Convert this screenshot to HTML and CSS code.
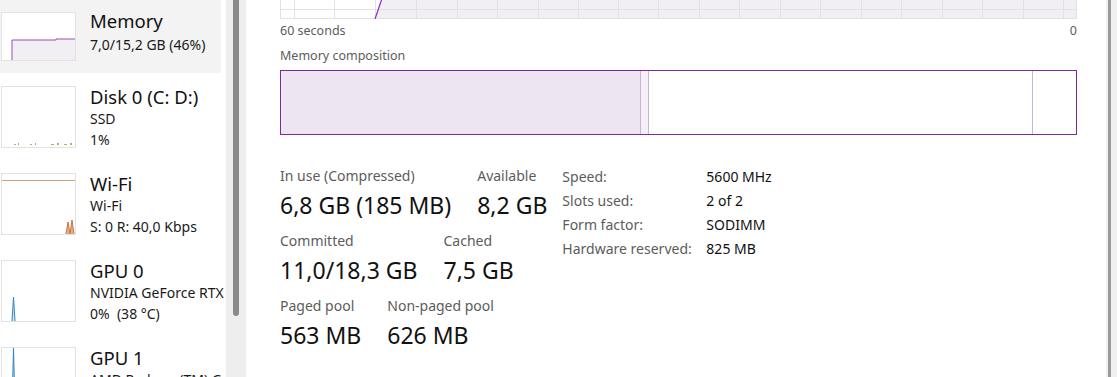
FILE: index.html
```html
<!DOCTYPE html>
<html lang="en">

<head>
    <meta charset="UTF-8">
    <meta name="viewport" content="width=device-width, initial-scale=1.0">
    <title>Task Manager - Performance</title>
    <link rel="stylesheet" href="styles.css">
</head>

<body>
    <nav class="sidebar">
        <div class="item item-memory selected">
            <div class="thumb thumb-memory">
                <svg width="73" height="47" viewBox="0 0 73 47">
                    <polygon points="10,47 10,27 54,27 54,26 73,26 73,47" fill="#f1eff3" />
                    <polyline points="10,47 10,27 54,27 54,26 73,26" fill="none" stroke="#9b4cbf" stroke-width="1" />
                </svg>
            </div>
            <div class="info">
                <div class="title">Memory</div>
                <div class="sub sub-memory">7,0/15,2 GB (46%)</div>
            </div>
        </div>

        <div class="item">
            <div class="thumb">
                <svg width="73" height="60" viewBox="0 0 73 60">
                    <g fill="#8fc46a">
                        <rect x="12" y="57" width="2" height="1" />
                        <rect x="16" y="56" width="1" height="2" />
                        <rect x="28" y="57" width="2" height="1" />
                        <rect x="33" y="56" width="1" height="2" />
                        <rect x="49" y="57" width="3" height="1" />
                        <rect x="55" y="56" width="2" height="2" />
                        <rect x="62" y="57" width="3" height="1" />
                        <rect x="68" y="56" width="2" height="2" />
                    </g>
                </svg>
            </div>
            <div class="info">
                <div class="title">Disk 0 (C: D:)</div>
                <div class="sub">SSD</div>
                <div class="sub">1%</div>
            </div>
        </div>

        <div class="item">
            <div class="thumb">
                <svg width="73" height="60" viewBox="0 0 73 60">
                    <line x1="0" y1="6.5" x2="73" y2="6.5" stroke="#c9a27c" stroke-width="1" />
                    <polyline points="64,60 66,48 68,60 70,46 72,60" fill="#e7b08b" stroke="#c8743f" stroke-width="1" />
                </svg>
            </div>
            <div class="info">
                <div class="title">Wi-Fi</div>
                <div class="sub">Wi-Fi</div>
                <div class="sub">S: 0 R: 40,0 Kbps</div>
            </div>
        </div>

        <div class="item">
            <div class="thumb">
                <svg width="73" height="60" viewBox="0 0 73 60">
                    <polyline points="10,60 11.5,36 13,60" fill="#cfe3f1" stroke="#2f86c0" stroke-width="1" />
                </svg>
            </div>
            <div class="info">
                <div class="title">GPU 0</div>
                <div class="sub">NVIDIA GeForce RTX 4060 Laptop GPU</div>
                <div class="sub">0%&nbsp; (38 °C)</div>
            </div>
        </div>

        <div class="item">
            <div class="thumb">
                <svg width="73" height="60" viewBox="0 0 73 60">
                    <polyline points="10,60 11.5,0 13,60" fill="#cfe3f1" stroke="#2f86c0" stroke-width="1" />
                </svg>
            </div>
            <div class="info">
                <div class="title">GPU 1</div>
                <div class="sub">AMD Radeon (TM) Graphics</div>
                <div class="sub">1%</div>
            </div>
        </div>
    </nav>

    <div class="scroll-left">
        <div class="scroll-thumb"></div>
    </div>

    <main class="content">
        <svg class="graph" width="797" height="19" viewBox="0 0 797 19">
            <polygon points="95,18.5 101,0 797,0 797,18.5" fill="#f2eff4" />
            <g stroke="#e2e2e2" stroke-width="1">
                <line x1="0.5" y1="0" x2="0.5" y2="19" />
                <line x1="796.5" y1="0" x2="796.5" y2="19" />
                <line x1="0" y1="9.5" x2="797" y2="9.5" />
                <line x1="0" y1="18.5" x2="797" y2="18.5" />
                <line x1="14.5" y1="0" x2="14.5" y2="19" />
                <line x1="54.5" y1="0" x2="54.5" y2="19" />
                <line x1="95.5" y1="0" x2="95.5" y2="19" />
                <line x1="136.5" y1="0" x2="136.5" y2="19" />
                <line x1="177.5" y1="0" x2="177.5" y2="19" />
                <line x1="217.5" y1="0" x2="217.5" y2="19" />
                <line x1="258.5" y1="0" x2="258.5" y2="19" />
                <line x1="298.5" y1="0" x2="298.5" y2="19" />
                <line x1="338.5" y1="0" x2="338.5" y2="19" />
                <line x1="378.5" y1="0" x2="378.5" y2="19" />
                <line x1="419.5" y1="0" x2="419.5" y2="19" />
                <line x1="459.5" y1="0" x2="459.5" y2="19" />
                <line x1="500.5" y1="0" x2="500.5" y2="19" />
                <line x1="540.5" y1="0" x2="540.5" y2="19" />
                <line x1="581.5" y1="0" x2="581.5" y2="19" />
                <line x1="621.5" y1="0" x2="621.5" y2="19" />
                <line x1="662.5" y1="0" x2="662.5" y2="19" />
                <line x1="702.5" y1="0" x2="702.5" y2="19" />
                <line x1="743.5" y1="0" x2="743.5" y2="19" />
                <line x1="783.5" y1="0" x2="783.5" y2="19" />
            </g>
            <line x1="95" y1="19" x2="101.5" y2="0" stroke="#8b2fb3" stroke-width="1.2" />
        </svg>

        <div class="axis">
            <span>60 seconds</span>
            <span>0</span>
        </div>

        <div class="comp-label">Memory composition</div>
        <div class="comp-bar">
            <div class="seg seg-inuse"></div>
            <div class="seg seg-modified"></div>
            <div class="seg seg-standby"></div>
            <div class="seg seg-free"></div>
        </div>

        <div class="stats">
            <div class="stats-main">
                <div class="stat-row">
                    <div class="stat">
                        <div class="stat-label">In use (Compressed)</div>
                        <div class="stat-value">6,8 GB (185 MB)</div>
                    </div>
                    <div class="stat">
                        <div class="stat-label">Available</div>
                        <div class="stat-value">8,2 GB</div>
                    </div>
                </div>
                <div class="stat-row">
                    <div class="stat">
                        <div class="stat-label">Committed</div>
                        <div class="stat-value">11,0/18,3 GB</div>
                    </div>
                    <div class="stat">
                        <div class="stat-label">Cached</div>
                        <div class="stat-value">7,5 GB</div>
                    </div>
                </div>
                <div class="stat-row">
                    <div class="stat">
                        <div class="stat-label">Paged pool</div>
                        <div class="stat-value">563 MB</div>
                    </div>
                    <div class="stat">
                        <div class="stat-label">Non-paged pool</div>
                        <div class="stat-value">626 MB</div>
                    </div>
                </div>
            </div>

            <div class="specs">
                <span class="spec-label">Speed:</span>
                <span class="spec-value">5600 MHz</span>
                <span class="spec-label">Slots used:</span>
                <span class="spec-value">2 of 2</span>
                <span class="spec-label">Form factor:</span>
                <span class="spec-value">SODIMM</span>
                <span class="spec-label">Hardware reserved:</span>
                <span class="spec-value">825 MB</span>
            </div>
        </div>
    </main>

    <div class="scroll-right">
        <div class="scroll-thumb-right"></div>
    </div>
</body>

</html>
```

FILE: styles.css
```css
body {
    font-family: "Segoe UI", "Noto Sans", sans-serif;
    margin: 0;
    padding: 0;
    width: 1117px;
    height: 377px;
    overflow: hidden;
    display: flex;
    background-color: #ffffff;
    color: #1a1a1a;
}

/* left list of devices */
.sidebar {
    width: 226px;
    flex-shrink: 0;
    overflow: hidden;
    white-space: nowrap;
}

.item {
    display: flex;
    width: 221px;
    height: 87px;
    box-sizing: border-box;
    padding-top: 13px;
}

.item.selected {
    background-color: #f3f3f3;
}

.item-memory {
    height: 73px;
    padding-top: 10px;
}

.thumb {
    width: 73px;
    height: 60px;
    margin-left: 1px;
    border: 1px solid #e2e2e2;
    background-color: #ffffff;
    flex-shrink: 0;
}

.thumb svg {
    display: block;
}

.thumb-memory {
    height: 47px;
    margin-top: 2px;
}

.info {
    margin-left: 14px;
}

.title {
    font-size: 18.5px;
    line-height: 22px;
    color: #111111;
}

.sub {
    font-size: 14px;
    line-height: 21px;
    color: #1a1a1a;
}

.sub-memory {
    margin-top: 2px;
}

.scroll-left {
    width: 20px;
    flex-shrink: 0;
    background-color: #eeeeee;
}

.scroll-thumb {
    width: 6px;
    height: 316px;
    margin-left: 7px;
    background-color: #8a8a8a;
    border-radius: 0 0 3px 3px;
}

/* main panel */
.content {
    width: 797px;
    margin-left: 34px;
    margin-right: 29px;
    flex-shrink: 0;
}

.graph {
    display: block;
}

.axis {
    display: flex;
    justify-content: space-between;
    margin-top: 4px;
    font-size: 12.5px;
    line-height: 16px;
    color: #5c5c5c;
}

.comp-label {
    margin-top: 9px;
    font-size: 12.5px;
    line-height: 16px;
    color: #5c5c5c;
}

.comp-bar {
    display: flex;
    margin-top: 6px;
    height: 65px;
    box-sizing: border-box;
    border: 1px solid #7d2c95;
}

.seg {
    border-right: 1px solid #c8b3d2;
}

.seg-inuse {
    width: 359px;
    background-color: #ede5f2;
}

.seg-modified {
    width: 7px;
    background-color: #f4eff6;
}

.seg-standby {
    width: 383px;
    background-color: #ffffff;
}

.seg-free {
    flex: 1;
    border-right: none;
}

.stats {
    display: flex;
    margin-top: 29px;
    gap: 15px;
}

.stat-row {
    display: flex;
    gap: 26px;
    margin-bottom: 7px;
}

.stat-label {
    font-size: 14px;
    line-height: 24px;
    color: #5c5c5c;
}

.stat-value {
    font-size: 23px;
    line-height: 34px;
    color: #111111;
}

.specs {
    display: grid;
    grid-template-columns: 144px auto;
    grid-auto-rows: 24px;
    align-items: center;
    font-size: 14px;
    align-self: flex-start;
}

.spec-label {
    color: #5c5c5c;
}

.spec-value {
    color: #111111;
}

.scroll-right {
    width: 11px;
    flex-shrink: 0;
    background-color: #f0f0f0;
}

.scroll-thumb-right {
    width: 3px;
    height: 377px;
    margin-left: 2px;
    background-color: #9a9a9a;
}
```
